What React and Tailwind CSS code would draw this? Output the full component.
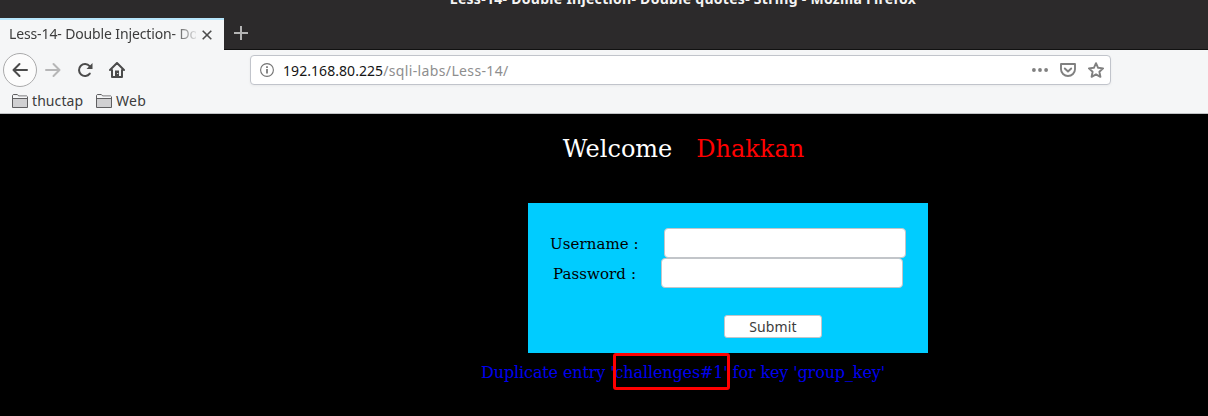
function Folder() {
  return (
    <svg className="mt-px h-4 w-4 shrink-0" viewBox="0 0 16 16" fill="none">
      <path d="M.5 13.5V1.3L1.3.5h4l1.2 1.5h8.2l.8.8v10.7z" fill="#d0d0d2" stroke="#5f5f61" />
      <path d="M1 1.2h4.4L6.6 2.6H15V4H1z" fill="#f5f6f7" />
      <path d="M.5 4.5h15" stroke="#5f5f61" />
    </svg>
  );
}

function TabStrip() {
  return (
    <div className="flex h-8 items-start">
      <div className="flex h-8 w-[224px] items-center border-t-2 border-[#b7e5fb] bg-[#f5f6f7] pl-[9px]">
        <div className="-mt-[2px] w-[187px] overflow-hidden whitespace-nowrap text-[14px] leading-5 tracking-[-0.13px] text-[#3c3c3c] [mask-image:linear-gradient(to_right,black_164px,transparent_190px)]">
          Less-14- Double Injection- Double quotes
        </div>
        <svg className="-mt-px ml-[6px] h-[10px] w-[10px]" viewBox="0 0 10 10" stroke="#4c4c4c" strokeWidth="1.6">
          <path d="M.7.7l8.6 8.6M9.3.7L.7 9.3" />
        </svg>
      </div>
      <svg className="ml-[10px] mt-2 h-[14px] w-[14px]" viewBox="0 0 14 14" stroke="#b4b4b4" strokeWidth="2">
        <path d="M7 0v14M0 7h14" />
      </svg>
    </div>
  );
}

function NavBar() {
  return (
    <div className="flex h-10 items-center pl-[3px]">
      <div className="flex h-[34px] w-[34px] items-center justify-center rounded-full border border-[#aaaaab] bg-[#fcfcfc]">
        <svg className="h-4 w-4" viewBox="0 0 16 16" fill="none" stroke="#4b4b4b" strokeWidth="2" strokeLinecap="round" strokeLinejoin="round">
          <path d="M15 8H1.5M7.5 2l-6 6 6 6" />
        </svg>
      </div>
      <svg className="ml-2 h-4 w-4" viewBox="0 0 16 16" fill="none" stroke="#b6b6b7" strokeWidth="2" strokeLinecap="round" strokeLinejoin="round">
        <path d="M1 8h13.5M8.5 2l6 6-6 6" />
      </svg>
      <svg className="ml-4 h-4 w-4" viewBox="0 0 16 16" fill="none" stroke="#4b4b4b" strokeWidth="2">
        <path d="M12.6 4.1A6 6 0 1 0 12.8 11.6" strokeLinecap="round" />
        <path d="M15.5 1v6h-6z" fill="#4b4b4b" stroke="none" />
      </svg>
      <svg className="ml-4 h-4 w-4" viewBox="0 0 16 16" fill="none" stroke="#4b4b4b" strokeWidth="2" strokeLinejoin="round" strokeLinecap="round">
        <path d="M1 8l7-7 7 7M3 8v7h10V8" />
        <path d="M6 15V8.5h4V15z" fill="#4b4b4b" stroke="none" />
        <path d="M8.2 11h1v1h-1z" fill="#f5f6f7" stroke="none" />
      </svg>
      <div className="ml-[125px] flex h-[30px] w-[861px] items-center rounded-[4px] border border-[#c1c4cb] bg-white pl-[9px] pr-[6px] shadow-[0_1px_3px_rgba(0,0,0,0.05)]">
        <svg className="h-[14px] w-[14px]" viewBox="0 0 14 14" fill="none" stroke="#737373">
          <circle cx="7" cy="7" r="6.4" strokeWidth="1.1" />
          <path d="M7 6v4.5M7 3.2v1.7" strokeWidth="1.7" />
        </svg>
        <div className="ml-[9px] mt-[2px] flex-1 whitespace-nowrap text-[14px] leading-5 tracking-[0.36px] text-[#8e8e8e]">
          <span className="tracking-[0.06px] text-[#151515]">192.168.80.225</span>/sqli-labs/Less-14/
        </div>
        <svg className="h-4 w-4" viewBox="0 0 16 16" fill="#808080">
          <circle cx="1.9" cy="8" r="1.9" />
          <circle cx="8" cy="8" r="1.9" />
          <circle cx="14.1" cy="8" r="1.9" />
        </svg>
        <svg className="ml-3 h-4 w-4" viewBox="0 0 16 16" fill="none" stroke="#808080" strokeWidth="1.9" strokeLinecap="round" strokeLinejoin="round">
          <path d="M1 2h14v5.2a7 6.8 0 0 1-14 0z" />
          <path d="M4.8 6.5L8 9.5l3.2-3" />
        </svg>
        <svg className="ml-3 h-4 w-4" viewBox="0 0 16 16" fill="none" stroke="#808080" strokeWidth="1.9" strokeLinejoin="round">
          <path d="M8 1.2l2.1 4.6 5 .6-3.7 3.4 1 5L8 12.3l-4.4 2.5 1-5L.9 6.4l5-.6z" />
        </svg>
      </div>
    </div>
  );
}

function Bookmarks() {
  return (
    <div className="flex h-[23px] items-center border-b border-transparent pl-3 text-[14px] leading-5 text-[#3c3c3c]">
      <Folder />
      <span className="ml-1 w-16 tracking-[0.08px]">thuctap</span>
      <Folder />
      <span className="ml-1 tracking-[0.3px]">Web</span>
    </div>
  );
}

function LoginPage() {
  return (
    <div className="flex h-[302px] w-[1366px] flex-col items-center bg-black font-['DejaVu_Serif',serif]">
      <div className="mt-[21px] flex gap-6 pl-px text-[24px] leading-7 text-white">
        <span>Welcome</span>
        <span className="text-[#ff0000]">Dhakkan</span>
      </div>
      <div className="ml-[90px] mt-10 h-[150px] w-[400px] bg-[#00ccff] pt-[25px] text-[15px] leading-8 tracking-[0.08px] text-black">
        <div className="flex h-[30px] pl-[22px]">
          <label htmlFor="user" className="w-[114px] whitespace-nowrap">Username :</label>
          <input id="user" className="h-[30px] w-[242px] rounded-[4px] border border-[#c2c5c9] bg-white outline-none" />
        </div>
        <div className="flex h-[30px] pl-[25px]">
          <label htmlFor="pass" className="w-[108px] whitespace-nowrap">Password :</label>
          <input id="pass" type="password" className="h-[30px] w-[242px] rounded-[4px] border border-[#c2c5c9] bg-white outline-none" />
        </div>
        <button className="ml-[196px] mt-[27px] flex h-[23px] w-[98px] items-center justify-center rounded-[3px] border border-[#c2c5c9] bg-white font-['Noto_Sans',sans-serif] text-[14px] leading-5 tracking-[0.16px] text-[#3c3c3c]">
          Submit
        </button>
      </div>
      <div className="relative mt-[10px] whitespace-nowrap text-[16px] leading-5 tracking-[-0.12px] text-[#0000ee]">
        Duplicate entry 'challenges#1' for key 'group_key'
        <div className="absolute left-[132px] top-[-10px] h-[37px] w-[117px] rounded-[3px] border-3 border-[#ff0000]" />
      </div>
    </div>
  );
}

export default function App() {
  return (
    <div className="h-[416px] w-[1208px] overflow-hidden bg-black font-['Noto_Sans',sans-serif]">
      <div className="h-[50px] w-[1366px] border-b border-[#111] bg-[#2c2a2b]">
        <div className="flex h-[18px] items-start justify-center">
          <div className="-mt-[11px] whitespace-nowrap text-[14px] font-bold leading-5 tracking-[0.29px] text-[#f4f4f4]">
            Less-14- Double Injection- Double quotes- String - Mozilla Firefox
          </div>
        </div>
        <TabStrip />
      </div>
      <div className="h-16 border-b border-[#c0c2c4] bg-[#f5f6f7]">
        <NavBar />
        <Bookmarks />
      </div>
      <LoginPage />
    </div>
  );
}
